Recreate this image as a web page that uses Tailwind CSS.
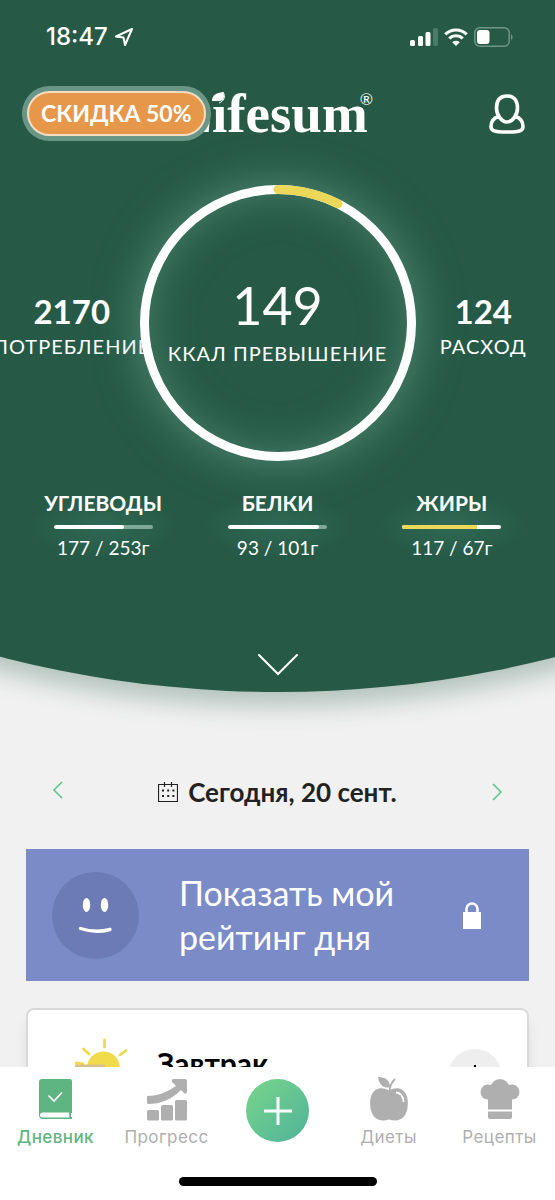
<!DOCTYPE html>
<html lang="ru">
<head>
<meta charset="utf-8">
<meta name="viewport" content="width=device-width, initial-scale=1">
<title>Lifesum</title>
<script src="https://cdn.jsdelivr.net/npm/@tailwindcss/browser@4"></script>
</head>
<body class="flex h-screen flex-col overflow-hidden bg-[#f1f1f1] font-[Lato,sans-serif] text-white">

<header class="relative shrink-0">
  <!-- Curved green backdrop -->
  <div class="absolute inset-x-0 top-0 -bottom-12 overflow-hidden">
    <div class="absolute bottom-12 left-1/2 h-[2234px] w-[2234px] -translate-x-1/2 rounded-full bg-[#265a47] shadow-[0_14px_24px_rgba(38,90,71,0.3)]"></div>
  </div>

  <div class="relative flex h-[508px] flex-col">
    <div class="flex h-[74px] items-center justify-between pr-[42px] pl-[46px]">
      <div class="flex items-center gap-1.5 font-[Inter,sans-serif] text-2xl font-medium">
        <span>18:47</span>
        <svg class="size-5" viewBox="0 0 20 20" fill="none" stroke="currentColor" stroke-width="2" stroke-linejoin="round"><path d="M18 2 L2 9.500 L9.500 10.500 L11 18 Z"/></svg>
      </div>
      <div class="flex items-center gap-1.5">
        <svg class="h-[18px] w-7" viewBox="0 0 28 18" fill="currentColor"><rect y="12" width="5" height="6" rx="1.500"/><rect x="8" y="8" width="5" height="10" rx="1.500"/><rect x="15.500" y="4" width="5" height="14" rx="1.500"/><rect x="23" width="5" height="18" rx="1.500" fill="#487b69"/></svg>
        <svg class="h-[18px] w-6" viewBox="0 0 24 18" fill="none" stroke="currentColor" stroke-width="3.200"><path d="M1.300 6.300 A15.500 15.500 0 0 1 22.700 6.300"/><path d="M5.200 10.400 A10 10 0 0 1 18.800 10.400"/><path d="M12 18 L8.200 14.200 A5.600 5.600 0 0 1 15.800 14.200 Z" fill="currentColor" stroke="none"/></svg>
        <svg class="h-5 w-[39px]" viewBox="0 0 39 20" fill="none"><rect x=".8" y=".8" width="34.400" height="18.400" rx="5" stroke="#6f9789" stroke-width="1.500"/><rect x="3" y="3" width="12.500" height="14" rx="3" fill="#fff"/><path d="M37 7 Q38.600 8 38.600 10 T37 13 Z" fill="#6f9789"/></svg>
      </div>
    </div>

    <div class="relative flex h-20 items-center justify-end px-[30px]">
      <h1 class="absolute inset-x-0 top-2 pr-3 text-center font-['Liberation_Serif',serif] text-[55px] leading-[64px] font-bold"><span class="relative">Lifesum<svg class="absolute top-[8px] left-[36px] h-4 w-4" viewBox="0 0 16 16"><rect width="15" height="14" fill="#265a47"/><path d="M1 10 C1 4 5 2 12 1 C14 6 13 10 8 10 Z" fill="#fff"/><path d="M12 1 C15 6 13 10 8 12" fill="none" stroke="#fff"/></svg><span class="absolute top-2 left-full -ml-2 font-[Lato,sans-serif] text-base leading-4 font-normal">®</span></span></h1>
      <button class="absolute top-[12px] left-[22px] h-[55px] min-w-[188px] rounded-full bg-[#6a9687] p-[5px] text-[23px] font-bold whitespace-nowrap"><span class="flex h-full items-center justify-center rounded-full border-2 border-[#f6dcc0] bg-[#e7974a] px-3">СКИДКА 50%</span></button>
      <button class="relative" aria-label="Профиль"><svg class="h-10 w-9" viewBox="0 0 36 40" fill="none" stroke="currentColor" stroke-width="3.600" stroke-linejoin="round"><path d="M18 2 C11 2 7.500 6.500 7.500 14 C7.500 21 12.500 28 18 28 C23.500 28 28.500 21 28.500 14 C28.500 6.500 25 2 18 2 Z"/><path d="M9.500 22.500 C5 24 2 27.500 2 32.500 C2 36 3.500 38 18 38 C32.500 38 34 36 34 32.500 C34 27.500 31 24 26.500 22.500"/></svg></button>
    </div>

    <section class="mt-[31px] grid grid-cols-[minmax(0,1fr)_276px_minmax(0,1fr)] px-1">
      <div class="flex flex-col items-center pt-[106px] whitespace-nowrap">
        <span class="text-[33px] leading-10 font-bold">2170</span>
        <span class="text-[20px] leading-[30px] tracking-wider">ПОТРЕБЛЕНИЕ</span>
      </div>
      <div class="relative flex h-[276px] flex-col items-center rounded-full pt-[92px] shadow-[0_0_45px_rgba(130,190,170,0.5),inset_0_0_48px_rgba(130,190,170,0.5)]">
        <svg class="absolute inset-0 size-full" viewBox="0 0 276 276" fill="none" stroke-width="9" stroke-linecap="round"><circle cx="138" cy="138" r="133.500" stroke="#fff"/><path d="M138 4.500 A133.500 133.500 0 0 1 198 18.700" stroke="#ecd858"/></svg>
        <span class="text-[52px] leading-[56px]">149</span>
        <span class="mt-1 text-[20px] leading-8 tracking-wider whitespace-nowrap">ККАЛ ПРЕВЫШЕНИЕ</span>
      </div>
      <div class="flex flex-col items-center pt-[106px] whitespace-nowrap">
        <span class="text-[33px] leading-10 font-bold">124</span>
        <span class="text-[20px] leading-[30px] tracking-wider">РАСХОД</span>
      </div>
    </section>
  </div>

  <section class="relative -mt-5 grid grid-cols-3 px-4 text-center">
    <div class="flex flex-col items-center bg-radial from-[#2f6955] to-[#2f6955]/0 to-60%">
      <h2 class="text-[21px] leading-[30px] font-bold">УГЛЕВОДЫ</h2>
      <div class="mt-[7px] h-1 w-[99px] overflow-hidden rounded-full bg-[#7fa899]"><div class="h-full rounded-full bg-white" style="width:71%"></div></div>
      <p class="mt-1 text-[19px] leading-[30px]">177 / 253г</p>
    </div>
    <div class="flex flex-col items-center bg-radial from-[#2f6955] to-[#2f6955]/0 to-60%">
      <h2 class="text-[21px] leading-[30px] font-bold">БЕЛКИ</h2>
      <div class="mt-[7px] h-1 w-[99px] overflow-hidden rounded-full bg-[#7fa899]"><div class="h-full rounded-full bg-white" style="width:92%"></div></div>
      <p class="mt-1 text-[19px] leading-[30px]">93 / 101г</p>
    </div>
    <div class="flex flex-col items-center bg-radial from-[#2f6955] to-[#2f6955]/0 to-60%">
      <h2 class="text-[21px] leading-[30px] font-bold">ЖИРЫ</h2>
      <div class="mt-[7px] h-1 w-[99px] overflow-hidden rounded-full bg-white"><div class="h-full bg-[#ecd858]" style="width:75%"></div></div>
      <p class="mt-1 text-[19px] leading-[30px]">117 / 67г</p>
    </div>
  </section>

  <div class="relative flex justify-center pt-[90px] pb-[16px]">
    <button aria-label="Подробнее"><svg class="h-[23px] w-10" viewBox="0 0 40 23" fill="none" stroke="currentColor" stroke-width="2" stroke-linecap="round"><path d="M1 2 L20 21 L39 2"/></svg></button>
  </div>
</header>

<main class="relative min-h-0 flex-1 overflow-hidden px-[26px] pt-[74px]">
  <div class="flex h-[52px] items-center justify-between px-[26px] text-[#58c58a]">
    <button aria-label="Предыдущий день" class="pb-1"><svg class="h-[18px] w-3" viewBox="0 0 12 18" fill="none" stroke="currentColor" stroke-width="1.500"><path d="M10 1 L2 9 L10 17"/></svg></button>
    <button class="flex items-center gap-2.5 text-[26px] font-bold text-[#222]">
      <svg class="size-5" viewBox="0 0 20 20" fill="none" stroke="currentColor"><path d="M.5 2.500 H19.500 V19.500 H.5 Z M6.500 0 V5 M13.500 0 V5" stroke-width="1.200"/><path d="M4 8.500 H16.500 M4 14 H16.500" stroke-width="2" stroke-dasharray="2 3.200"/></svg>
      <span>Сегодня, 20 сент.</span>
    </button>
    <button aria-label="Следующий день"><svg class="h-[18px] w-3" viewBox="0 0 12 18" fill="none" stroke="currentColor" stroke-width="1.500"><path d="M2 1 L10 9 L2 17"/></svg></button>
  </div>

  <button class="mt-[31px] flex h-[132px] w-full items-center bg-[#7b8bc8] pr-12 pl-[26px] text-left">
    <svg class="size-[87px]" viewBox="0 0 87 87"><circle cx="43.500" cy="43.500" r="43.500" fill="#6c7bb6"/><g fill="#fff"><ellipse cx="34.500" cy="33" rx="3.700" ry="7"/><ellipse cx="52.500" cy="33" rx="3.700" ry="7"/></g><path d="M28.500 56.500 Q43.500 61.500 58 57.500" fill="none" stroke="#fff" stroke-width="3.400" stroke-linecap="round"/></svg>
    <span class="ml-10 flex-1 text-[34px] leading-[44px]">Показать мой<br>рейтинг дня</span>
    <svg class="h-[27px] w-[18px]" viewBox="0 0 18 27"><path d="M3.500 11 V7 A5.500 5.500 0 0 1 14.500 7 V11" fill="none" stroke="#fff" stroke-width="2.600"/><rect y="10" width="18" height="17" fill="#fff"/></svg>
  </button>

  <article class="mt-[27px] flex h-40 items-start rounded-lg border-2 border-[#d9d9d9] bg-white pr-[25px] pl-[47px] shadow-lg">
    <svg class="mt-7 h-[60px] w-14" viewBox="0 0 56 60" fill="none" stroke="#f0dc4b" stroke-width="2.800" stroke-linecap="round"><circle cx="28.500" cy="30" r="16.500" fill="#f0dc4b" stroke="none"/><path d="M29.500 2 V9 M8.500 11 L14 16 M51 12.500 L45 17 M1 25 L8 26"/><path d="M1 28 H29" stroke="#d9bf8a"/></svg>
    <h2 class="ml-[26px] flex-1 pt-[35px] text-[30px] leading-9 font-bold text-black">Завтрак</h2>
    <button aria-label="Добавить завтрак" class="mt-[39px] flex size-[54px] items-center justify-center rounded-full bg-[#eee] text-black"><svg class="size-[22px]" viewBox="0 0 22 22" stroke="currentColor" stroke-width="2"><path d="M11 0 V22 M0 11 H22"/></svg></button>
  </article>
</main>

<nav class="relative shrink-0 bg-white pb-[14px] font-[Inter,sans-serif] text-[17px] text-[#afafaf]">
  <div class="grid h-[110px] grid-cols-5 pt-2.5 leading-6 tracking-wide">
    <a href="#" class="flex flex-col items-center gap-1 text-[#5fb581]">
      <svg class="h-11 w-10" viewBox="0 0 40 44"><path d="M6 2 H34 Q36 2 36 4 V36 H10 V40 H36 V42 H7 Q3 42 3 38 V5 Q3 2 6 2 Z" fill="currentColor"/><path d="M7 35.500 H34 V40.500 H7 Q4 40.500 4 38 T7 35.500 Z" fill="#fff"/><path d="M33 35 H36 V36 H35 V41 H33.500 Z" fill="currentColor"/><path d="M12.500 18.500 L18 24 L26 15.500" fill="none" stroke="#fff" stroke-width="1.600"/></svg>
      <span class="font-medium">Дневник</span>
    </a>
    <a href="#" class="flex flex-col items-center gap-1">
      <svg class="h-11 w-10" viewBox="0 0 40 44" fill="currentColor"><rect y="33" width="12" height="10.500" rx="1.500"/><rect x="14" y="28" width="12" height="15.500" rx="1.500"/><rect x="28" y="23" width="12" height="20.500" rx="1.500"/><path d="M0 19 Q15 19 29 9 L25 5 Q24 2 27 2 H38 Q40 2 40 4 V15 Q39 18 37 16 L34 13 Q20 27 1 27 Q0 27 0 25 Z"/></svg>
      <span>Прогресс</span>
    </a>
    <div class="flex justify-center"><button aria-label="Добавить" class="mt-0.5 flex size-[63px] items-center justify-center rounded-full bg-linear-to-br from-[#70cf8c] from-20% to-[#50b29b] text-white"><svg class="size-7" viewBox="0 0 28 28" stroke="currentColor" stroke-width="3"><path d="M14 0 V28 M0 14 H28"/></svg></button></div>
    <a href="#" class="flex flex-col items-center gap-1">
      <svg class="h-11 w-10" viewBox="0 0 40 44" fill="currentColor"><path d="M20 13.500 C15 10.500 10 10.500 6.500 13 C1.500 16.500 .5 24 1.500 31 C3 40 9 46 20 42.500 C31 46 37 40 38.500 31 C39.500 24 38.500 16.500 33.500 13 C30 10.500 25 10.500 20 13.500 Z"/><path d="M9 0 C17 0 21 4 21 10.500 C14 11 10 8 9 0 Z"/><path d="M20.500 14 Q21 7 26 2" fill="none" stroke="currentColor" stroke-width="1.800"/><path d="M27 15.500 Q34 16 34.500 25" fill="none" stroke="#fff" stroke-width="1.800"/></svg>
      <span>Диеты</span>
    </a>
    <a href="#" class="flex flex-col items-center gap-1">
      <svg class="h-11 w-10" viewBox="0 0 40 44" fill="currentColor"><circle cx="8" cy="15" r="7.500"/><circle cx="20" cy="11.500" r="9.500"/><circle cx="32" cy="15" r="7.500"/><path d="M8 15 H32 V32.500 H8 Z"/><path d="M8 34.500 H32 V40 Q32 42 30 42 H10 Q8 42 8 40 Z"/></svg>
      <span>Рецепты</span>
    </a>
  </div>
  <div class="mx-auto h-[9px] w-[198px] rounded-full bg-black"></div>
</nav>
</body>
</html>
